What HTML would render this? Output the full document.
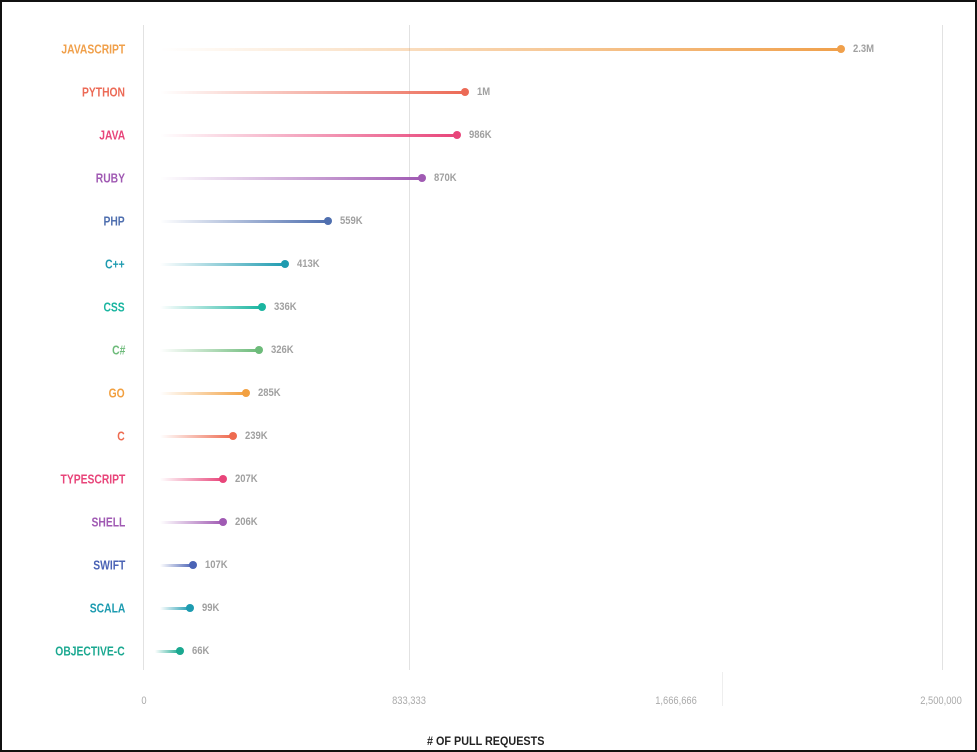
<!DOCTYPE html>
<html><head><meta charset="utf-8"><style>
html,body{margin:0;padding:0;background:#fff}
body{width:977px;height:752px;position:relative;overflow:hidden;font-family:"Liberation Sans",sans-serif}
.frame{position:absolute;left:0;top:0;width:973px;height:748px;border:2px solid #111}
.vl{position:absolute;top:25px;height:645px;width:1px;background:#e2e2e2}
.lab{position:absolute;right:852px;font-weight:bold;font-size:12px;line-height:14px;white-space:nowrap;transform:scale(0.86,1.1);transform-origin:right center}
.bar{position:absolute;height:3px}
.dot{position:absolute;width:8px;height:8px;border-radius:50%}
.val{position:absolute;font-weight:bold;font-size:11px;color:#a0a0a0;line-height:14px;transform:scaleX(0.86);transform-origin:left center}
.tick{position:absolute;top:695px;font-size:11px;color:#aaa;transform:translateX(-50%) scaleX(0.85)}
</style></head><body>
<div class="frame"></div>
<div class="vl" style="left:143px"></div>
<div class="vl" style="left:409px"></div>
<div class="vl" style="left:942px"></div>
<div class="vl" style="left:722px;top:672px;height:34px;background:#eee"></div>
<div id="c"></div>
<div class="tick" style="left:144px">0</div>
<div class="tick" style="left:409px">833,333</div>
<div class="tick" style="left:676px">1,666,666</div>
<div class="tick" style="left:941px">2,500,000</div>
<div style="position:absolute;left:427px;top:734px;font-weight:bold;font-size:12px;color:#222;transform:scaleX(0.9);transform-origin:left">#&nbsp;OF PULL REQUESTS</div>
<script>
var d=[["JAVASCRIPT","#f0a04b",841,"2.3M"],["PYTHON","#ec6a56",465,"1M"],["JAVA","#e8457a",457,"986K"],["RUBY","#a05ab3",422,"870K"],["PHP","#4f6faf",328,"559K"],["C++","#1e9bb0",285,"413K"],["CSS","#1ab5a0",262,"336K"],["C#","#6dbb7a",259,"326K"],["GO","#f2a040",246,"285K"],["C","#ee6b50",233,"239K"],["TYPESCRIPT","#e8457a",223,"207K"],["SHELL","#a05ab3",223,"206K"],["SWIFT","#4b63b5",193,"107K"],["SCALA","#1d9bb0",190,"99K"],["OBJECTIVE-C","#1aa890",180,"66K"]];
var h="";d.forEach(function(r,i){var y=49+i*43;var s=Math.min(160,r[2]-25);
h+='<div class="lab" style="top:'+(y-7)+'px;color:'+r[1]+'">'+r[0]+'</div>';
h+='<div class="bar" style="left:'+s+'px;width:'+(r[2]-s)+'px;top:'+(y-1.5)+'px;background:linear-gradient(to right,rgba(255,255,255,0),'+r[1]+')"></div>';
h+='<div class="dot" style="left:'+(r[2]-4)+'px;top:'+(y-4)+'px;background:'+r[1]+'"></div>';
h+='<div class="val" style="left:'+(r[2]+12)+'px;top:'+(y-7)+'px">'+r[3]+'</div>';});
document.getElementById("c").innerHTML=h;
</script>
</body></html>
